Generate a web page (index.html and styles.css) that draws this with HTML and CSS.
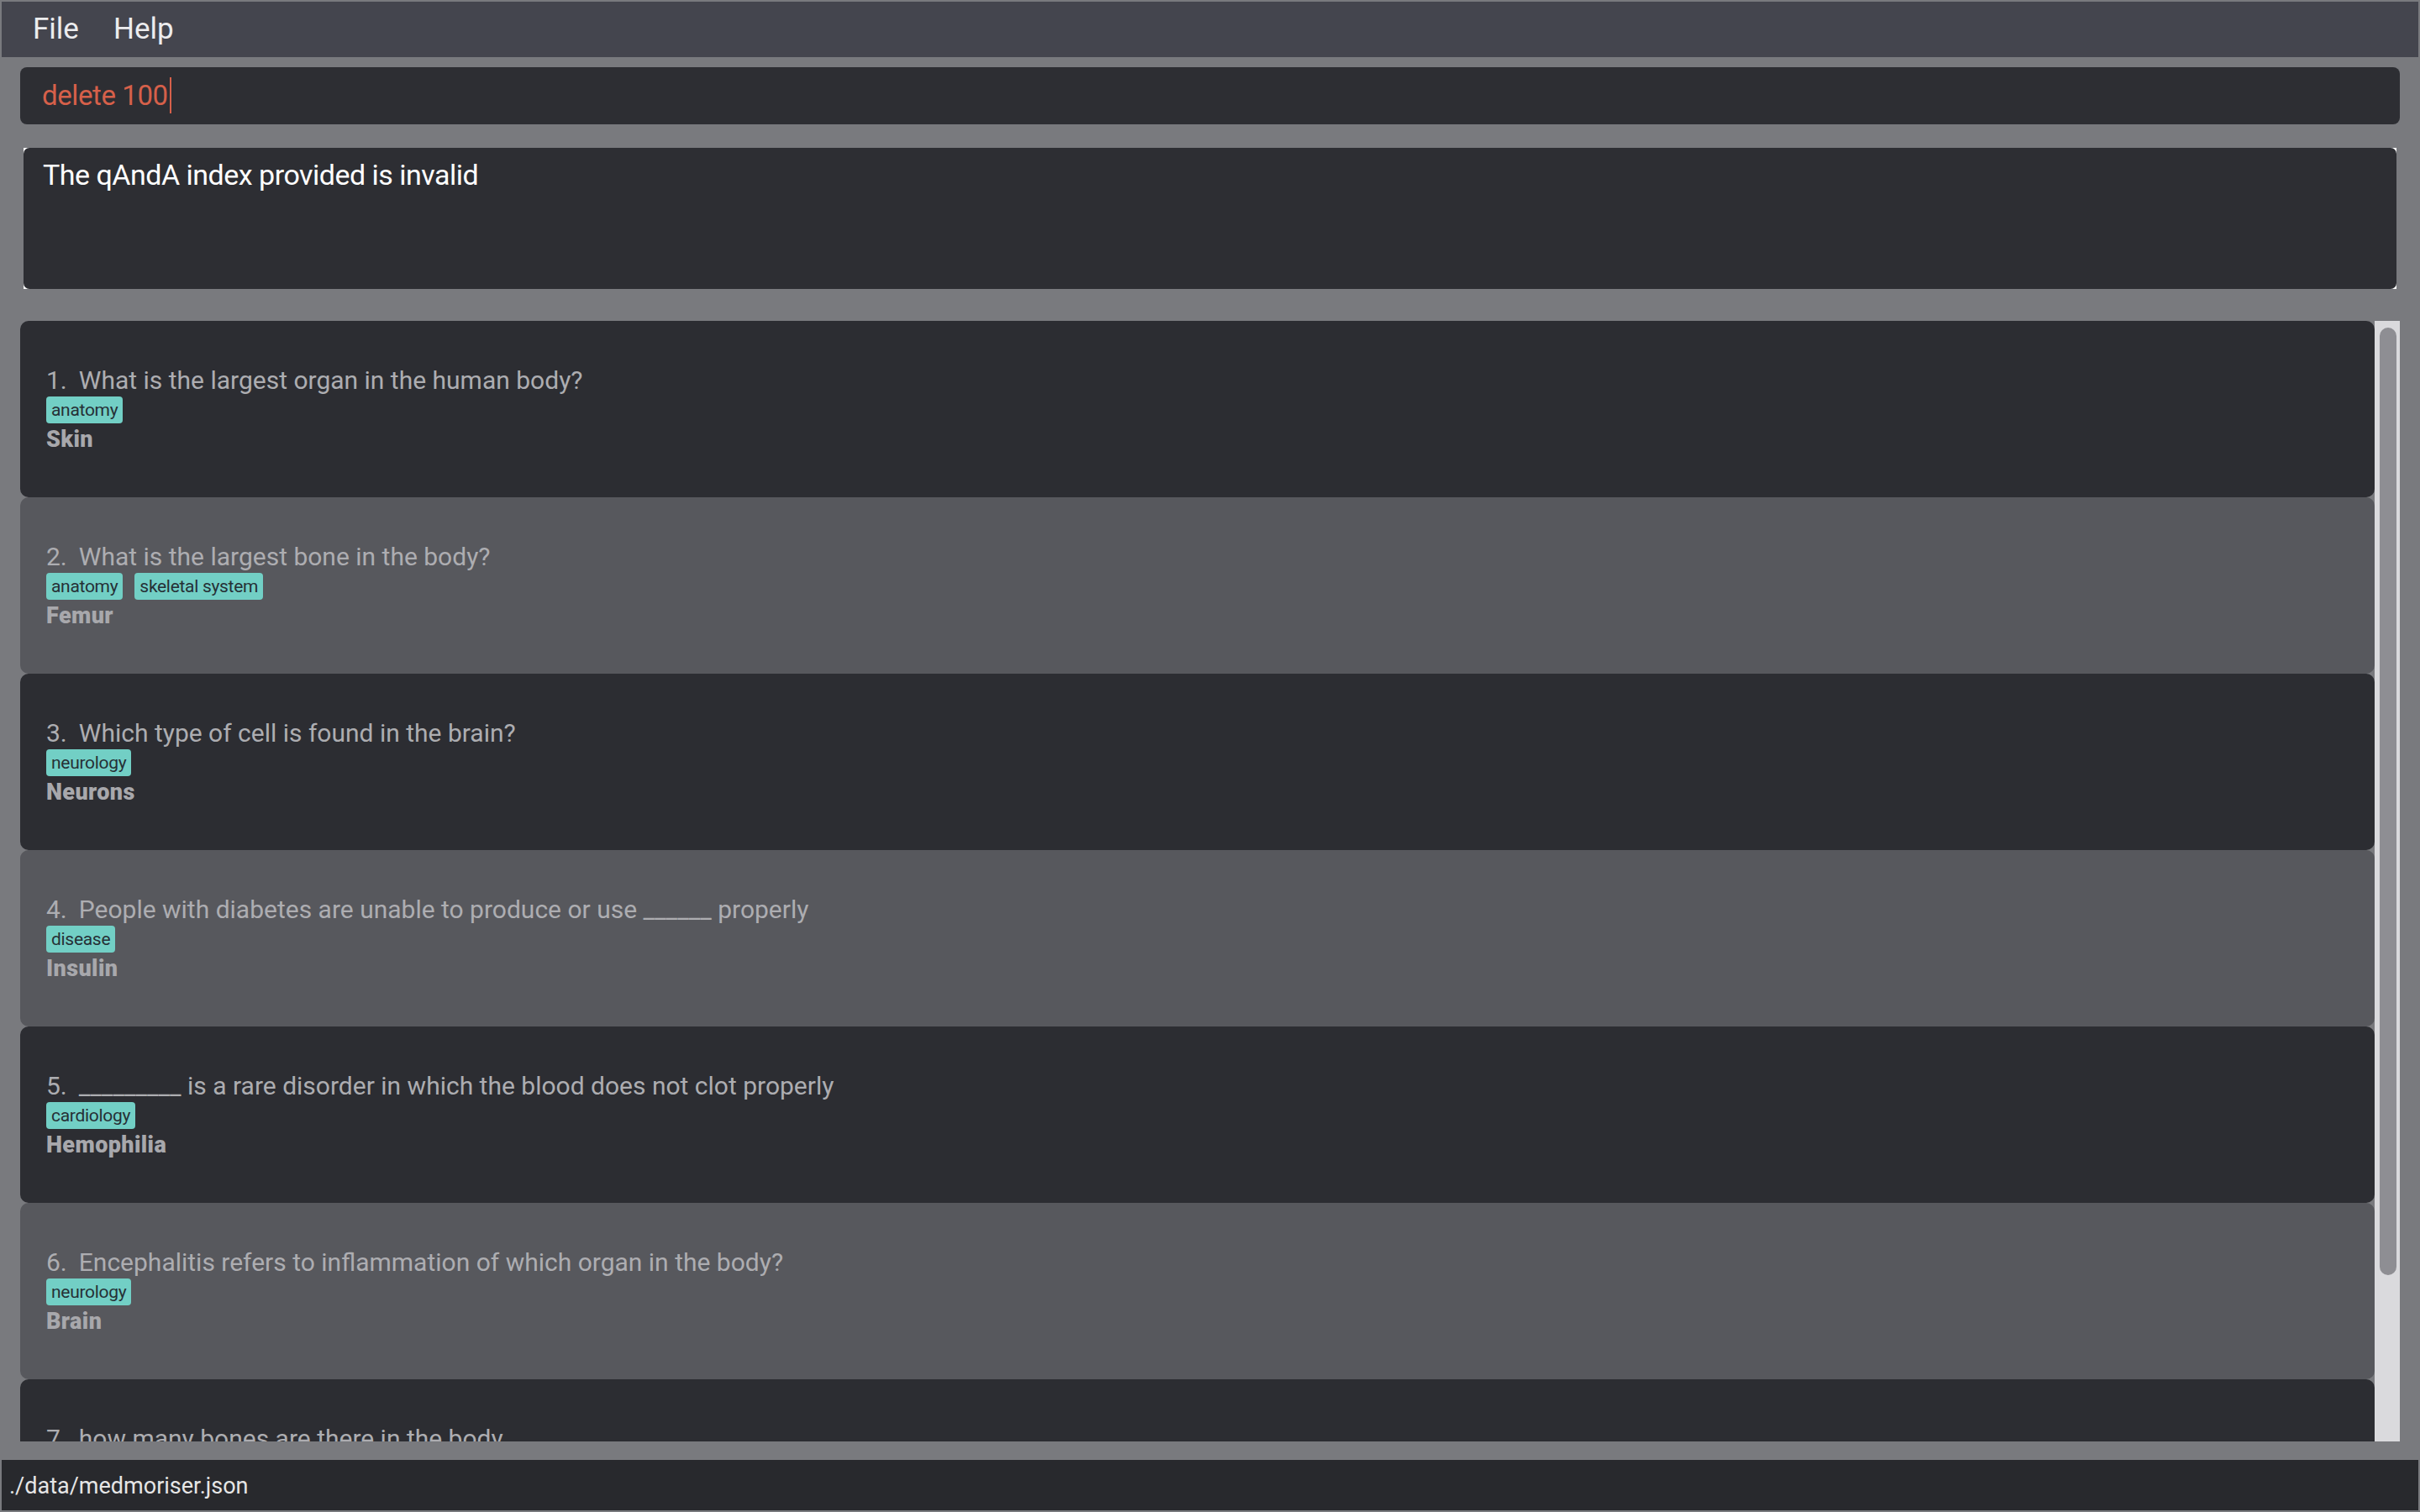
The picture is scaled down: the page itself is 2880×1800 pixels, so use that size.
FILE: index.html
```html
<!DOCTYPE html>
<html>
<head>
<meta charset="utf-8">
<title>MedMoriser</title>
<link rel="stylesheet" href="styles.css">
</head>
<body>
<div class="app">
  <div class="menubar">
    <span class="menu-item">File</span>
    <span class="menu-item">Help</span>
  </div>
  <div class="command-box">
    <span class="command-text">delete 100</span><span class="caret"></span>
  </div>
  <div class="result-wrap">
    <div class="result-box">The qAndA index provided is invalid</div>
  </div>
  <div class="list-pane">
    <div class="cards">
      <div class="card dark">
        <div class="title"><span class="qid">1.</span>What is the largest organ in the human body?</div>
        <div class="tags"><span class="tag">anatomy</span></div>
        <div class="answer">Skin</div>
      </div>
      <div class="card light">
        <div class="title"><span class="qid">2.</span>What is the largest bone in the body?</div>
        <div class="tags"><span class="tag">anatomy</span><span class="tag">skeletal system</span></div>
        <div class="answer">Femur</div>
      </div>
      <div class="card dark">
        <div class="title"><span class="qid">3.</span>Which type of cell is found in the brain?</div>
        <div class="tags"><span class="tag">neurology</span></div>
        <div class="answer">Neurons</div>
      </div>
      <div class="card light">
        <div class="title"><span class="qid">4.</span>People with diabetes are unable to produce or use ______ properly</div>
        <div class="tags"><span class="tag">disease</span></div>
        <div class="answer">Insulin</div>
      </div>
      <div class="card dark">
        <div class="title"><span class="qid">5.</span>_________ is a rare disorder in which the blood does not clot properly</div>
        <div class="tags"><span class="tag">cardiology</span></div>
        <div class="answer">Hemophilia</div>
      </div>
      <div class="card light">
        <div class="title"><span class="qid">6.</span>Encephalitis refers to inflammation of which organ in the body?</div>
        <div class="tags"><span class="tag">neurology</span></div>
        <div class="answer">Brain</div>
      </div>
      <div class="card dark">
        <div class="title"><span class="qid">7.</span>how many bones are there in the body</div>
      </div>
    </div>
    <div class="scrollbar"><div class="thumb"></div></div>
  </div>
  <div class="statusbar">./data/medmoriser.json</div>
</div>
</body>
</html>
```
FILE: styles.css
```css
html, body {
  margin: 0;
  padding: 0;
  background: #797a7e;
}
body {
  font-family: Roboto, "Liberation Sans", sans-serif;
}
.app {
  width: 2880px;
  height: 1800px;
  padding: 2px;
  box-sizing: border-box;
  display: flex;
  flex-direction: column;
  overflow: hidden;
}
.menubar {
  height: 66px;
  background: #44454e;
  display: flex;
  align-items: stretch;
  padding-left: 37px;
  flex-shrink: 0;
}
.menu-item {
  font-size: 35px;
  line-height: 66px;
  color: #ececee;
  margin-right: 41px;
}
.command-box {
  margin: 12px 22px 0 22px;
  height: 68px;
  box-sizing: border-box;
  padding: 14px 26px;
  background: #2d2e33;
  border-radius: 8px;
  display: flex;
  align-items: flex-start;
  flex-shrink: 0;
}
.command-text {
  font-size: 33px;
  line-height: 40px;
  color: #d6604a;
  letter-spacing: -0.4px;
  white-space: pre;
}
.caret {
  display: inline-block;
  width: 2px;
  height: 43px;
  margin-top: -2px;
  margin-left: 2px;
  background: #d6604a;
}
.result-wrap {
  margin: 28px 26px 0 26px;
  height: 168px;
  background: #ffffff;
  flex-shrink: 0;
}
.result-box {
  height: 100%;
  box-sizing: border-box;
  background: #2d2e33;
  border-radius: 7px;
  padding: 12px 23px;
  font-size: 34px;
  line-height: 40px;
  letter-spacing: -0.5px;
  color: #ffffff;
}
.list-pane {
  margin: 38px 22px 0 22px;
  height: 1334px;
  display: flex;
  flex-shrink: 0;
  overflow: hidden;
}
.cards {
  flex: 1;
  display: flex;
  flex-direction: column;
  overflow: hidden;
}
.card {
  height: 210px;
  flex-shrink: 0;
  box-sizing: border-box;
  padding: 53px 31px 0 31px;
  border-radius: 10px;
}
.card.dark {
  background: #2c2d32;
}
.card.light {
  background: #57585d;
}
.title {
  font-size: 30px;
  line-height: 36px;
  color: #adadb1;
  letter-spacing: 0;
  white-space: nowrap;
}
.qid {
  display: inline-block;
  margin-right: 14px;
}
.tags {
  display: flex;
  gap: 14px;
  margin-top: 1px;
  height: 32px;
}
.tag {
  background: #72cfc5;
  color: #263036;
  font-size: 21px;
  line-height: 32px;
  padding: 0 6px;
  border-radius: 4px;
  letter-spacing: -0.3px;
}
.answer {
  margin-top: 4px;
  font-size: 27px;
  line-height: 31px;
  font-weight: 900;
  letter-spacing: 0.4px;
  color: #a8a8ac;
}
.scrollbar {
  width: 30px;
  flex-shrink: 0;
  background: #dadadd;
  box-sizing: border-box;
  padding: 8px 4px 0 6px;
}
.thumb {
  height: 1128px;
  background: #8e8e93;
  border-radius: 10px;
}
.statusbar {
  margin-top: 22px;
  height: 60px;
  box-sizing: border-box;
  padding: 2px 0 0 9px;
  background: #28292d;
  color: #e6e6e6;
  font-size: 27px;
  line-height: 58px;
  flex-shrink: 0;
}
```
